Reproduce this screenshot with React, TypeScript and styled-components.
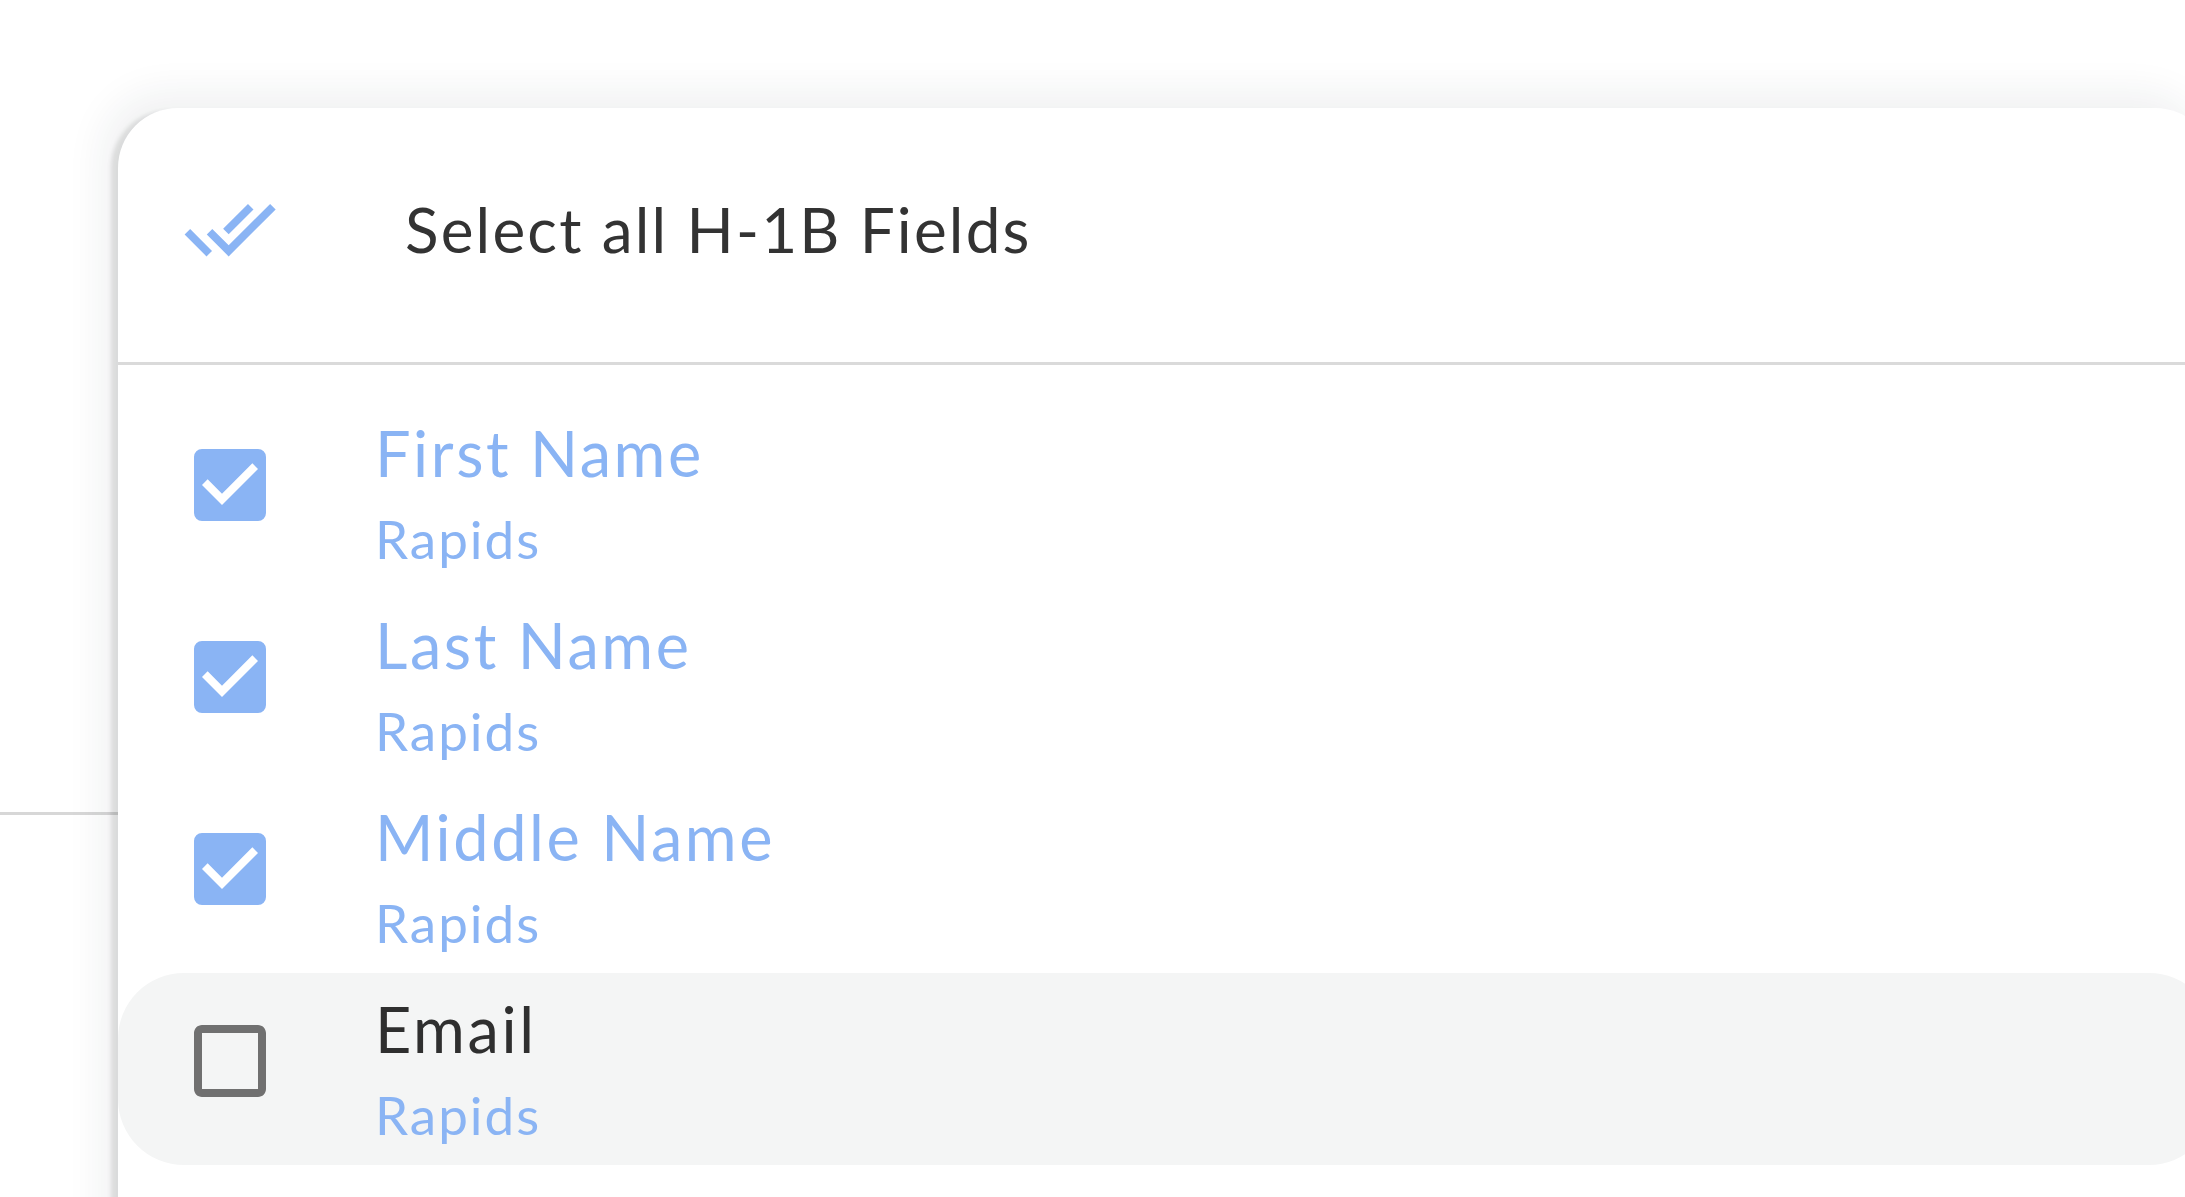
import React, { FunctionComponent } from 'react'
import styled, { createGlobalStyle } from 'styled-components'
import { MdCheckBox, MdCheckBoxOutlineBlank, MdDoneAll } from 'react-icons/md'

interface Field {
	name: string;
	source: string;
	checked: boolean;
}

const fields: Field[] = [
	{ name: 'First Name', source: 'Rapids', checked: true },
	{ name: 'Last Name', source: 'Rapids', checked: true },
	{ name: 'Middle Name', source: 'Rapids', checked: true },
	{ name: 'Email', source: 'Rapids', checked: false },
]

const GlobalStyle = createGlobalStyle`
	html, body {
		margin: 0;
		padding: 0;
		background: #ffffff;
		overflow: hidden;
		font-family: Lato, "Open Sans", sans-serif;
	}
	#root {
		width: 2185px;
		height: 1197px;
		overflow: hidden;
	}
`

const Page = styled.div`
	width: 2185px;
	height: 1197px;
	display: flex;
	flex-direction: column;
`
const TopRule = styled.div`
	height: 2px;
	margin-top: 1px;
	background: #f1f2f2;
`
const Body = styled.div`
	flex: 1;
	display: grid;
	grid-template-columns: 118px 2097px;
`
const Aside = styled.div`
	display: flex;
	flex-direction: column;
`
const AsideSpacer = styled.div`
	height: 811px;
	border-bottom: 3px solid #d7d7d7;
`
const Card = styled.div`
	margin-top: 107px;
	height: 1200px;
	background: #ffffff;
	border-radius: 60px 60px 0 0;
	box-shadow: -10px 0 4px -3px rgba(0, 0, 0, 0.1), -14px -14px 40px rgba(30, 40, 60, 0.07);
	display: flex;
	flex-direction: column;
`
const Header = styled.div`
	height: 257px;
	display: flex;
	align-items: center;
	padding: 0 0 12px 65px;
	box-sizing: border-box;
	border-bottom: 3px solid #dadada;
	color: #8ab4f4;
`
const HeaderTitle = styled.span`
	margin-left: 128px;
	font-size: 62px;
	line-height: 74px;
	color: #333333;
	letter-spacing: 2.2px;
`
const List = styled.div`
	padding-top: 32px;
	display: flex;
	flex-direction: column;
`
const Row = styled.div<{ $active: boolean }>`
	height: 192px;
	display: flex;
	align-items: flex-start;
	padding-left: 64px;
	border-radius: 66px;
	background: ${({ $active }) => ($active ? '#f4f5f5' : 'transparent')};
`
const Box = styled.div<{ $checked: boolean }>`
	margin-top: 40px;
	width: 96px;
	height: 96px;
	flex: none;
	display: flex;
	color: ${({ $checked }) => ($checked ? '#8ab4f4' : '#707070')};
`
const Texts = styled.div`
	margin-left: 97px;
	padding-top: 19px;
	display: flex;
	flex-direction: column;
`
const Name = styled.span<{ $checked: boolean }>`
	font-size: 63px;
	line-height: 74px;
	letter-spacing: 2.6px;
	color: ${({ $checked }) => ($checked ? '#8ab4f4' : '#2f2f2f')};
`
const Source = styled.span`
	margin-top: 18px;
	font-size: 53px;
	line-height: 62px;
	letter-spacing: 2px;
	color: #8ab4f4;
`

const FieldRow: FunctionComponent<{ field: Field }> = ({ field }) => (
	<Row $active={!field.checked}>
		<Box $checked={field.checked}>
			{field.checked ? <MdCheckBox size={96} /> : <MdCheckBoxOutlineBlank size={96} />}
		</Box>
		<Texts>
			<Name $checked={field.checked}>{field.name}</Name>
			<Source>{field.source}</Source>
		</Texts>
	</Row>
)

const App: FunctionComponent = () => {
	return (
		<>
			<GlobalStyle />
			<Page>
				<TopRule />
				<Body>
					<Aside>
						<AsideSpacer />
					</Aside>
					<Card>
						<Header>
							<MdDoneAll size={94} />
							<HeaderTitle>Select all H-1B Fields</HeaderTitle>
						</Header>
						<List>
							{fields.map(f => <FieldRow key={f.name} field={f} />)}
						</List>
					</Card>
				</Body>
			</Page>
		</>
	)
}

export default App
